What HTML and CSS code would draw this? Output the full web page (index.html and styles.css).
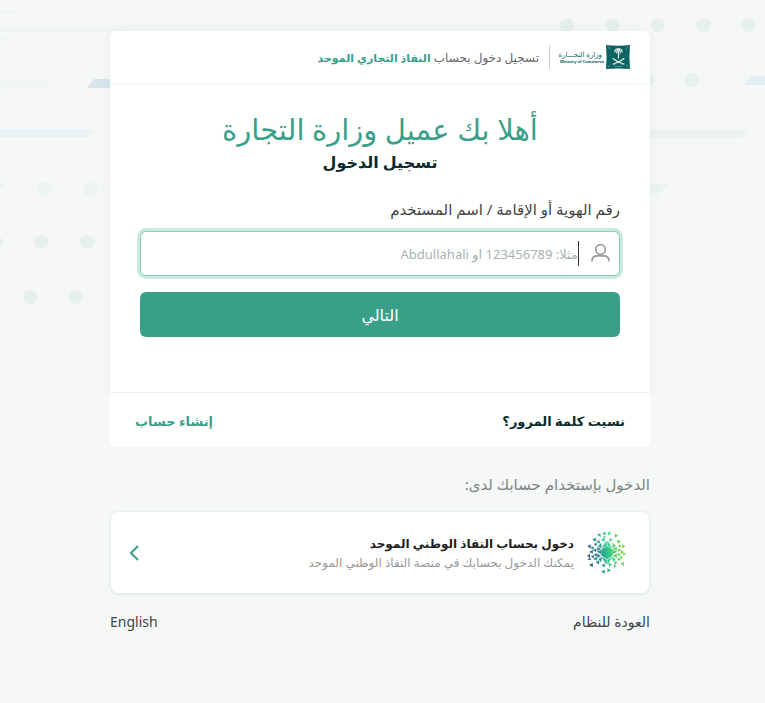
FILE: index.html
```html
<!DOCTYPE html>
<html lang="ar" dir="rtl">
<head>
  <meta charset="UTF-8">
  <meta name="viewport" content="width=device-width, initial-scale=1">
  <title>تسجيل الدخول</title>
  <link rel="stylesheet" href="styles.css">
</head>
<body>

  <!-- background shapes -->
  <svg class="shapes shapes-left" width="140" height="320" viewBox="0 0 140 320" aria-hidden="true">
    <defs>
      <path id="drop" d="M7 0C6 4 2 7-1 7A7 7 0 0 1-1-7C3-7 6-4 7 0Z"/>
    </defs>
    <g fill="#f2f5f5">
      <path d="M0 10h15v3H0zM0 26h130v6H0zM0 38h15v3H0zM0 80h51l-6 8H0zM0 90h15v2H0z"/>
    </g>
    <path fill="#d6e6ea" d="M94 79h46v9H87z"/>
    <path fill="#eaf3f3" d="M0 129h96l-8 8H0zM0 183h6l-6 6z"/>
    <g fill="#ebf4f1">
      <use href="#drop" x="45" y="189"/>
      <use href="#drop" x="91" y="189"/>
    </g>
    <g fill="#e6f0ed">
      <use href="#drop" x="-4" y="242"/>
      <use href="#drop" x="42" y="242"/>
      <use href="#drop" x="88" y="242"/>
      <use href="#drop" x="31" y="297"/>
      <use href="#drop" x="76" y="297"/>
    </g>
  </svg>
  <svg class="shapes shapes-right" width="215" height="320" viewBox="550 0 215 320" aria-hidden="true">
    <defs>
      <path id="drop-r" d="M-7 0C-6-4-2-7 1-7A7 7 0 0 1 1 7C-3 7-6 4-7 0Z"/>
    </defs>
    <g fill="#e6f1ee">
      <use href="#drop-r" x="566" y="25"/>
      <use href="#drop-r" x="612" y="25"/>
      <use href="#drop-r" x="657" y="25"/>
      <use href="#drop-r" x="703" y="25"/>
      <use href="#drop-r" x="748" y="25"/>
      <use href="#drop-r" x="646" y="80"/>
      <use href="#drop-r" x="691" y="80"/>
    </g>
    <path fill="#e3eef0" d="M751 76h14v9h-22z"/>
    <path fill="#eaf2f2" d="M640 130h107l-6 8H640zM640 184h28l-7 9h-21z"/>
  </svg>

  <main class="page">
    <div class="card">
      <div class="card-main">
        <header class="card-header">
          <div class="logo">
            <svg width="24" height="24" viewBox="0 0 24 24" aria-hidden="true">
              <path fill="#0b645f" d="M0 0Q12 1.500 24 0Q22.800 12 24 24Q12 22.800 0 24Q1.200 12 0 0Z"/>
              <g fill="none" stroke="#e8f3f1" stroke-linecap="round">
                <path stroke-width="1.200" d="M12.500 5v8"/>
                <path stroke-width="1.200" d="M12.500 5Q9.500 2.500 8.800 7M12.500 5Q15.500 2.500 16.200 7M12.500 5Q10.500 5 10.800 8M12.500 5Q14.500 5 14.200 8M11 3.800h3"/>
                <path stroke-width="1.100" d="M7 13.500Q11 17 17.500 19M18 13.500Q14 17 7.500 19M7 19h2M16 19h2"/>
                <path stroke-width=".7" stroke="#7fb0ab" d="M2 2l2 2M22 2l-2 2M2 22l2-2M22 22l-2-2M9 21.500h7"/>
              </g>
            </svg>
            <div class="logo-text">
              <span class="logo-ar">وزارة التجـــارة</span>
              <span class="logo-en">Ministry of Commerce</span>
            </div>
          </div>
          <p class="header-title">تسجيل دخول بحساب <strong>النفاذ التجاري الموحد</strong></p>
        </header>

        <form class="login-form">
          <h1>أهلا بك عميل وزارة التجارة</h1>
          <h2>تسجيل الدخول</h2>

          <label for="username">رقم الهوية أو الإقامة / اسم المستخدم</label>
          <div class="field">
            <svg class="user-icon" width="20" height="20" viewBox="0 0 20 20" aria-hidden="true">
              <g fill="none" stroke="#999" stroke-width="1.600" stroke-linecap="round">
                <circle cx="10.500" cy="5.500" r="4.800"/>
                <path d="M2 17C2 13.500 4.500 11.900 7.500 11.900H13.500C16.500 11.900 19 13.500 19 17"/>
              </g>
            </svg>
            <span class="caret"></span>
            <input type="text" id="username" placeholder="مثلا: 123456789 او Abdullahali">
          </div>

          <button type="submit">التالي</button>
        </form>
      </div>

      <div class="card-footer">
        <a href="#" class="forgot">نسيت كلمة المرور؟</a>
        <a href="#" class="register">إنشاء حساب</a>
      </div>
    </div>

    <p class="other-title">الدخول بإستخدام حسابك لدى:</p>

    <a href="#" class="provider">
      <svg class="nafath" width="40" height="42" viewBox="22 20 120 126" aria-hidden="true">
        <defs>
          <linearGradient id="nafath-color" gradientUnits="userSpaceOnUse" x1="24" y1="90" x2="138" y2="70">
            <stop offset="0" stop-color="#2d4f80"/>
            <stop offset=".3" stop-color="#2b8f8c"/>
            <stop offset=".55" stop-color="#36c98c"/>
            <stop offset="1" stop-color="#8fd83c"/>
          </linearGradient>
        </defs>
        <g fill="url(#nafath-color)" stroke="url(#nafath-color)" stroke-width="1.500" stroke-linejoin="round">
          <path d="M82 63l16 9v19l-16 10-16-10V72z"/>
          <path d="M80 48v13l-12 6zM84 48v13l12 6zM64 54l1 13-9-4zM100 54l-1 13 9-4zM53 66l10 4-10 6zM111 66l-10 4 10 6zM53 79l11-5v12zM111 79l-11-5v12zM53 86l10 6-10 5zM111 86l-10 6 10 5zM57 101l9-5-2 13zM107 101l-9-5 2 13zM68 97l12 6v13zM96 97l-12 6v13z"/>
          <path d="M54 28l8-3v9zM69 24l8-4v9zM86 20l8 4-8 5zM106 26l9 5-9 5zM66 43l8-4v9zM90 39l8 4-8 5zM71 35l5-3v6z"/>
          <path d="M39 43l9-5v10zM51 50l8-5v9zM43 57l7-4v8zM24 63l9-5v10zM34 68l7-4v8zM41 75l8-5v9zM30 80l9-5v9zM43 88l8-4v9zM35 94l7-4v8zM23 92l8-5v9zM42 101l9-5v9zM25 103h9l-4-6zM30 119l9-5v10zM49 111l9-5v10z"/>
          <path d="M114 44l9 5-9 5zM128 58l8 5-8 5zM118 58l7 4-7 4zM116 70l8 4-8 5zM124 76l8 4-8 5zM131 82l8 4-8 4zM115 83l8 5-8 4zM123 92l7 4-7 4zM115 97l8 5-8 4zM105 107l8 5-8 5zM124 116l8-6v12zM109 122l-6-5v10z"/>
          <path d="M66 120l9-5v10zM88 113l8 5-8 5zM66 139l9-5v10zM84 130l9 5-9 5z"/>
        </g>
      </svg>
      <span class="provider-text">
        <span class="provider-name">دخول بحساب النفاذ الوطني الموحد</span>
        <span class="provider-note">يمكنك الدخول بحسابك في منصة النفاذ الوطني الموحد</span>
      </span>
      <svg class="arrow" width="10" height="16" viewBox="0 0 10 16" aria-hidden="true">
        <path fill="none" stroke="#3a9f88" stroke-width="2" d="M9 1L2 8l7 7"/>
      </svg>
    </a>

    <footer class="page-footer">
      <a href="#">العودة للنظام</a>
      <a href="#" lang="en">English</a>
    </footer>
  </main>

</body>
</html>
```
FILE: styles.css
```css
* {
  box-sizing: border-box;
}
body {
  margin: 0;
  padding: 31px 5px 24px 0;
  background-color: #f6f8f8;
  font-family: "Noto Sans", "DejaVu Sans", sans-serif;
  font-size: 14px;
  color: #444;
  position: relative;
}
h1, h2, p {
  margin: 0;
}
a {
  color: inherit;
  text-decoration: none;
}
.shapes {
  position: absolute;
  top: 0;
  z-index: -1;
}
.shapes-left {
  left: 0;
}
.shapes-right {
  right: 0;
}
.page {
  max-width: 540px;
  margin: 0 auto;
}

.card {
  background: white;
  border-radius: 6px;
}
.card-main {
  border-radius: 6px 6px 0 0;
  box-shadow: 0 0 16px rgba(0,60,50,0.05);
}
.card-header {
  display: flex;
  align-items: center;
  gap: 10px;
  height: 54px;
  padding: 0 20px;
  border-bottom: 2px solid #fafafa;
}
.logo {
  display: flex;
  align-items: center;
  gap: 4px;
  padding-left: 10px;
  border-left: 1px solid #ccc;
}
.logo-text {
  display: flex;
  flex-direction: column;
  width: 42px;
  color: #0b645f;
  white-space: nowrap;
}
.logo-ar {
  font-size: 7px;
  line-height: 8px;
}
.logo-en {
  direction: ltr;
  font-size: 4px;
  line-height: 5px;
  font-weight: bold;
}
.header-title {
  font-size: 12px;
  color: #666;
}
.header-title strong {
  font-size: 11px;
  color: #3a9f88;
}

.login-form {
  padding: 23px 30px 55px;
}
h1 {
  font-size: 29px;
  line-height: 42px;
  font-weight: normal;
  text-align: center;
  color: #3a9f88;
}
h2 {
  font-size: 16px;
  line-height: 24px;
  text-align: center;
  color: #0b2b2c;
}
label {
  display: block;
  margin-top: 23px;
  font-size: 15px;
  line-height: 24px;
}
.field {
  display: flex;
  align-items: center;
  height: 45px;
  margin-top: 10px;
  padding: 0 9px;
  background: white;
  border: 1px solid #7fd0b9;
  border-radius: 6px;
  box-shadow: 0 0 0 3px #cce8df;
}
.user-icon {
  flex: none;
}
.caret {
  width: 1px;
  height: 25px;
  margin-right: 11px;
  background: #333;
}
input {
  flex: 1;
  min-width: 0;
  height: 43px;
  padding: 0;
  border: none;
  outline: none;
  background: none;
  font-family: inherit;
  font-size: 13px;
}
input::placeholder {
  color: #a6b3b1;
  opacity: 1;
}
button {
  display: block;
  width: 100%;
  height: 45px;
  margin-top: 16px;
  padding: 0;
  background-color: #3a9f88;
  color: white;
  border: none;
  border-radius: 6px;
  font-family: inherit;
  font-size: 16px;
  cursor: pointer;
}
button:hover {
  background-color: #338c78;
}
.card-footer {
  display: flex;
  justify-content: space-between;
  align-items: center;
  height: 55px;
  padding: 2px 25px 0;
  border-top: 1px solid #eef0f0;
  font-size: 13px;
  font-weight: bold;
  background: white;
  border-radius: 0 0 6px 6px;
  position: relative;
}
.forgot {
  color: #0b2b2c;
}
.register {
  color: #3a9f88;
}

.other-title {
  margin-top: 25px;
  font-size: 15px;
  line-height: 24px;
  color: #7b8585;
}
.provider {
  display: flex;
  align-items: center;
  height: 83px;
  margin-top: 15px;
  padding: 0 22px 0 18px;
  background: white;
  border: 1px solid #e8eeed;
  border-radius: 8px;
  box-shadow: 0 1px 3px rgba(0,60,50,0.08);
}
.provider-text {
  flex: 1;
  display: flex;
  flex-direction: column;
  margin-right: 13px;
}
.provider-name {
  font-size: 12px;
  line-height: 20px;
  font-weight: bold;
  color: #222;
}
.provider-note {
  font-size: 12px;
  line-height: 18px;
  color: #999;
}
.page-footer {
  display: flex;
  justify-content: space-between;
  margin-top: 16px;
  font-size: 14px;
  line-height: 24px;
}
```
